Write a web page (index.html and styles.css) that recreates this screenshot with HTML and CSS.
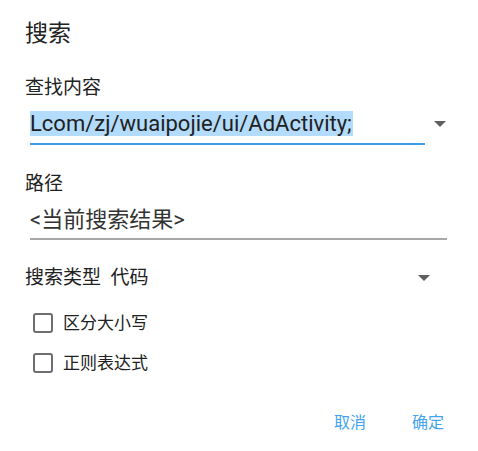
FILE: index.html
```html
<!DOCTYPE html>
<html lang="zh-CN">
  <head>
    <meta charset="UTF-8" />
    <meta name="viewport" content="width=device-width, initial-scale=1.0" />
    <title>搜索</title>
    <link rel="stylesheet" href="styles.css">
  </head>
  <body>
    <div class="dialog">
      <h1 class="dialog-title">搜索</h1>

      <div class="field-label">查找内容</div>
      <div class="input-row">
        <div class="input focused">
          <span class="selected">Lcom/zj/wuaipojie/ui/AdActivity;</span>
        </div>
        <span class="arrow"></span>
      </div>

      <div class="field-label path-label">路径</div>
      <div class="input plain">&lt;当前搜索结果&gt;</div>

      <div class="type-row">
        <span class="type-text">搜索类型&nbsp;&nbsp;代码</span>
        <span class="arrow"></span>
      </div>

      <label class="check-row">
        <span class="box"></span>
        <span>区分大小写</span>
      </label>
      <label class="check-row">
        <span class="box"></span>
        <span>正则表达式</span>
      </label>

      <div class="actions">
        <button class="btn">取消</button>
        <button class="btn">确定</button>
      </div>
    </div>
  </body>
</html>
```

FILE: styles.css
```css
body {
  margin: 0;
  background-color: #ffffff;
  font-family: Roboto, "Noto Sans CJK SC", sans-serif;
  color: #212121;
}

.dialog {
  padding: 18px 30px 0 25px;
}

.dialog-title {
  margin: 0;
  font-size: 23px;
  font-weight: normal;
  line-height: 32px;
  color: #212121;
}

.field-label {
  margin-top: 24px;
  font-size: 19px;
  line-height: 28px;
  color: #212121;
}

.path-label {
  margin-top: 25px;
}

.input-row {
  display: flex;
  align-items: center;
  margin-top: 8px;
}

.input {
  margin-left: 5px;
  font-size: 22px;
  line-height: 28px;
  padding-bottom: 4px;
  border-bottom: 2px solid #a8a8a8;
}

.input.focused {
  width: 395px;
  padding-bottom: 5px;
  border-bottom-color: #3f9ce8;
}

.input.plain {
  width: 417px;
  margin-top: 8px;
  color: #333;
}

.selected {
  background-color: #b3dbfb;
  padding-right: 1px;
}

.arrow {
  width: 0;
  height: 0;
  border-left: 6px solid transparent;
  border-right: 6px solid transparent;
  border-top: 6px solid #5f5f5f;
  margin-left: 9px;
  margin-top: -8px;
}

.type-row {
  display: flex;
  align-items: center;
  justify-content: space-between;
  width: 405px;
  margin-top: 24px;
  font-size: 19px;
  line-height: 28px;
}

.type-row .arrow {
  margin-top: 0;
}

.check-row {
  display: flex;
  align-items: center;
  gap: 10px;
  margin-left: 8px;
  font-size: 17px;
  line-height: 24px;
}

.check-row:first-of-type {
  margin-top: 19px;
}

.check-row + .check-row {
  margin-top: 16px;
}

.box {
  width: 16px;
  height: 16px;
  border: 2.5px solid #6e6e6e;
  border-radius: 3px;
}

.actions {
  display: flex;
  justify-content: flex-end;
  gap: 46px;
  margin-top: 34px;
  padding-right: 4px;
}

.btn {
  border: none;
  background: none;
  padding: 0;
  font-family: Roboto, "Noto Sans CJK SC", sans-serif;
  font-size: 16px;
  color: #42a3f3;
}
```
